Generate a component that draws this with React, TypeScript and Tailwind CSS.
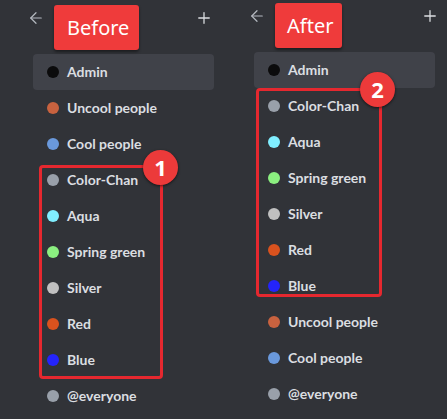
import React from 'react';
import { ArrowLeft, Plus } from 'lucide-react';

type Role = { name: string; color: string };

const admin: Role = { name: 'Admin', color: '#0b0b0c' };
const uncool: Role = { name: 'Uncool people', color: '#c8623f' };
const cool: Role = { name: 'Cool people', color: '#6a99dc' };
const everyone: Role = { name: '@everyone', color: '#99a0aa' };

const colorRoles: Role[] = [
  { name: 'Color-Chan', color: '#99a0aa' },
  { name: 'Aqua', color: '#80eeff' },
  { name: 'Spring green', color: '#8bef80' },
  { name: 'Silver', color: '#c0c0c0' },
  { name: 'Red', color: '#d9521e' },
  { name: 'Blue', color: '#2424fb' },
];

const RoleRow: React.FC<{ role: Role; active?: boolean }> = ({ role, active }) => (
  <div
    className={`h-9 w-[181px] flex items-center gap-2 pl-[14px] rounded ${
      active ? 'bg-[#404249]' : ''
    }`}
  >
    <span className="w-3 h-3 rounded-full shrink-0" style={{ backgroundColor: role.color }} />
    <span className="text-[14px] font-bold text-[#dbdee1] leading-none font-['Lato',sans-serif]">
      {role.name}
    </span>
  </div>
);

const NumberBadge: React.FC<{ n: number; className: string }> = ({ n, className }) => (
  <div
    className={`absolute w-[35px] h-[35px] rounded-full bg-[#ec3a3a] shadow-[0_1px_3px_rgba(0,0,0,0.6)] flex items-center justify-center text-white text-[22px] font-bold ${className}`}
  >
    {n}
  </div>
);

const Header: React.FC<{ label: string; labelClass: string }> = ({ label, labelClass }) => (
  <div className="relative h-[54px] flex items-start justify-between pt-[9px] pl-[27px] pr-[8px] text-[#b5bac1]">
    <ArrowLeft size={18} strokeWidth={1.6} />
    <Plus size={18} strokeWidth={1.7} className="text-[#dbdee1]" />
    <div
      className={`absolute top-[5px] left-[54px] h-[45px] rounded-[3px] bg-[#ef3b3b] shadow-[0_2px_3px_rgba(0,0,0,0.45)] flex items-center text-white text-[20px] ${labelClass}`}
    >
      {label}
    </div>
  </div>
);

export default function App() {
  return (
    <div
      className="w-[447px] h-[419px] bg-[#313338] flex overflow-hidden"
      style={{ fontFamily: '"Noto Sans", "Open Sans", sans-serif' }}
    >
      {/* Before */}
      <div className="w-[221px] shrink-0">
        <Header label="Before" labelClass="w-[85px] pl-[13px]" />
        <div className="pl-[33px] flex flex-col">
          <RoleRow role={admin} active />
          <RoleRow role={uncool} />
          <RoleRow role={cool} />
          <div className="relative">
            {colorRoles.map((r) => (
              <RoleRow key={r.name} role={r} />
            ))}
            <div className="absolute left-[6px] w-[124px] top-[3px] bottom-[-1px] border-[3px] border-[#e5282f] rounded-[4px]" />
            <NumberBadge n={1} className="left-[110px] top-[-12px]" />
          </div>
          <RoleRow role={everyone} />
        </div>
      </div>

      {/* After */}
      <div className="flex-1 -mt-[2px]">
        <Header label="After" labelClass="w-[67px] pl-[12px]" />
        <div className="pl-[33px] flex flex-col">
          <RoleRow role={admin} active />
          <div className="relative">
            {colorRoles.map((r) => (
              <RoleRow key={r.name} role={r} />
            ))}
            <div className="absolute left-[2px] w-[126px] top-0 bottom-[7px] border-[3px] border-[#e5282f] rounded-[4px]" />
            <NumberBadge n={2} className="left-[106px] top-[-16px]" />
          </div>
          <RoleRow role={uncool} />
          <RoleRow role={cool} />
          <RoleRow role={everyone} />
        </div>
      </div>
    </div>
  );
}
